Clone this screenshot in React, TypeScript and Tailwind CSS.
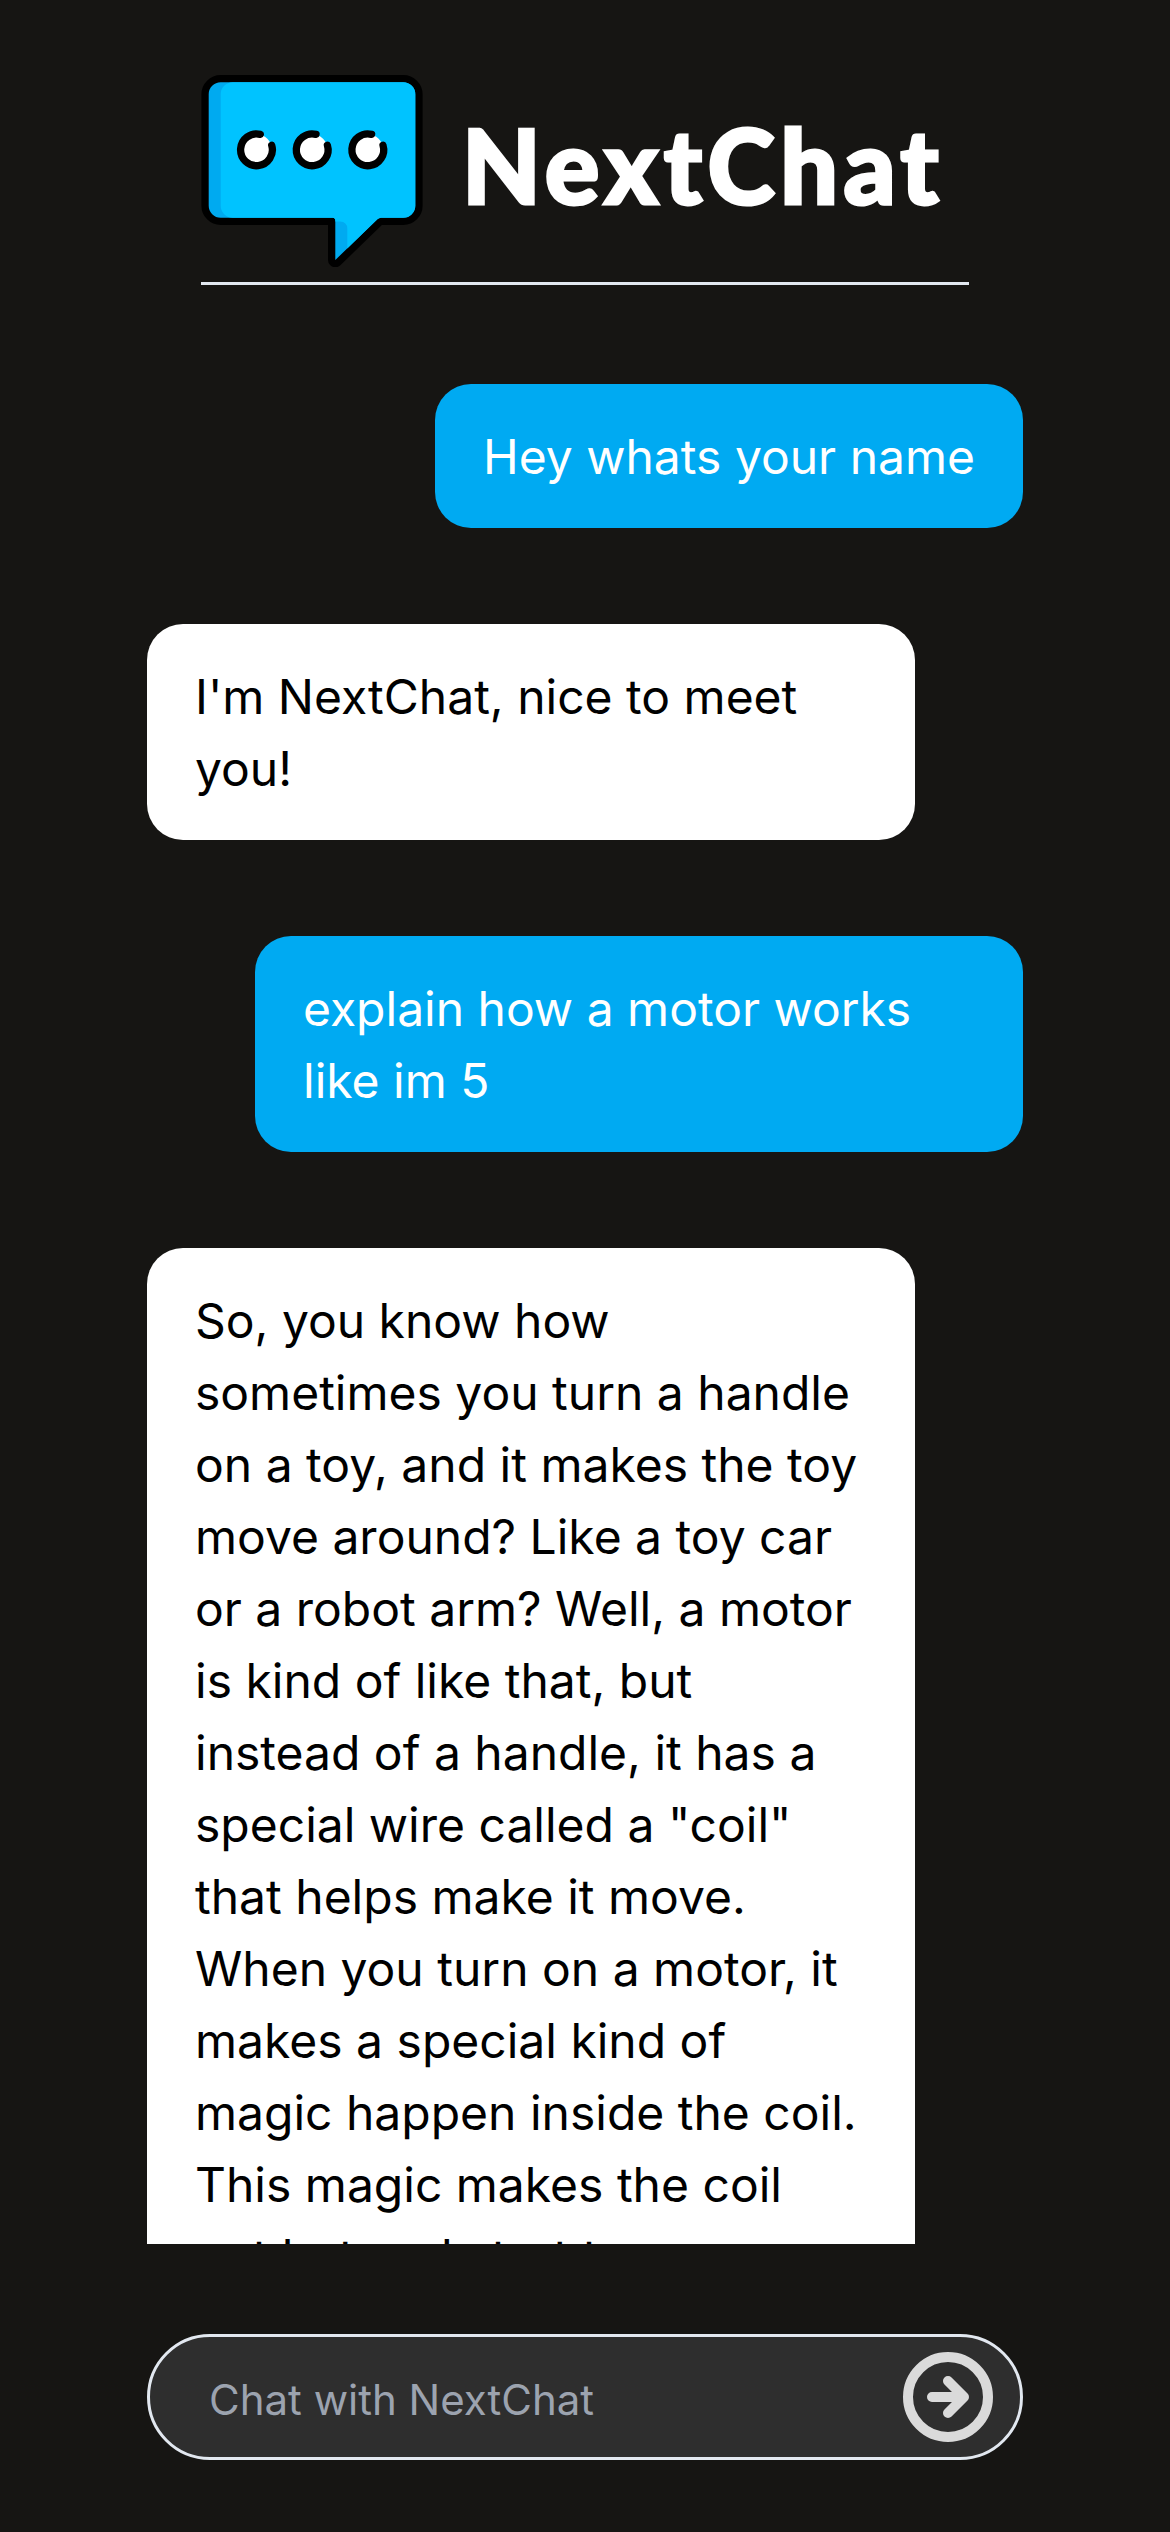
import React from "react";

type Message = { from: "user" | "bot"; text: string };

const messages: Message[] = [
  { from: "user", text: "Hey whats your name" },
  { from: "bot", text: "I'm NextChat, nice to meet you!" },
  { from: "user", text: "explain how a motor works like im 5" },
  {
    from: "bot",
    text: 'So, you know how sometimes you turn a handle on a toy, and it makes the toy move around? Like a toy car or a robot arm? Well, a motor is kind of like that, but instead of a handle, it has a special wire called a "coil" that helps make it move. When you turn on a motor, it makes a special kind of magic happen inside the coil. This magic makes the coil get hot and start to move.',
  },
];

function LogoDot({ x }: { x: number }) {
  return (
    <g transform={`translate(${x} 74.8)`}>
      <circle r="15.6" fill="#fff" />
      <path
        d="M4 -15.4A15.9 15.9 0 1 0 15.4 -4.6"
        fill="none"
        stroke="#000"
        strokeWidth="7.3"
        strokeLinecap="round"
      />
    </g>
  );
}

function Logo() {
  return (
    <svg viewBox="0 0 222 192" className="h-[192px] w-[222px] shrink-0" aria-hidden="true">
      <path
        d="M19.7 7.3H202.3A12 12 0 0 1 214.3 19.3V130.7A12 12 0 0 1 202.3 142.7H180Q178 142.7 176.4 144.2L134.3 185V145.5Q134.3 142.7 131.5 142.7H19.7A12 12 0 0 1 7.7 130.7V19.3A12 12 0 0 1 19.7 7.3Z"
        fill="#00aaf0"
        stroke="#000"
        strokeWidth="14.6"
        strokeLinejoin="round"
        paintOrder="stroke"
      />
      <path
        d="M31.7 7.3H202.3A12 12 0 0 1 214.3 19.3V130.7A12 12 0 0 1 202.3 142.7H180Q178 142.7 176.4 144.2L146.3 173.4V153.5Q146 147 139 146.6H134.3V145.5Q134.3 142.7 131.5 142.7H31.7A12 12 0 0 1 19.7 130.7V19.3A12 12 0 0 1 31.7 7.3Z"
        fill="#00c3ff"
      />
      <LogoDot x={55.3} />
      <LogoDot x={111} />
      <LogoDot x={166.6} />
    </svg>
  );
}

function SendIcon() {
  return (
    <svg
      viewBox="0 0 90 90"
      className="size-[90px]"
      fill="none"
      stroke="#dadada"
      strokeWidth="10"
      strokeLinecap="round"
      strokeLinejoin="round"
      aria-hidden="true"
    >
      <circle cx="45" cy="45" r="40" />
      <path d="M29 45H61M45 29L61 45L45 61" />
    </svg>
  );
}

function Bubble({ from, text }: Message) {
  return from === "user" ? (
    <div className="max-w-[768px] self-end rounded-[36px] bg-[#00aaf2] px-12 pt-[37px] pb-[35px] text-white">{text}</div>
  ) : (
    <div className="max-w-[768px] self-start rounded-[36px] bg-white px-12 pt-[37px] pb-[35px] text-black">{text}</div>
  );
}

export default function App() {
  return (
    <main className="flex h-[2532px] w-[1170px] flex-col items-center overflow-hidden bg-[#161513] font-['Inter',sans-serif]">
      <header className="mt-[75px] flex h-[210px] w-[768px] shrink-0 items-start border-b-[3px] border-slate-200">
        <Logo />
        <h1 className="mt-[27px] ml-[39px] font-['Lato',sans-serif] text-[102px] leading-[126px] font-black tracking-[5.4px] whitespace-nowrap text-white [-webkit-text-stroke:3px_white]">
          NextChat
        </h1>
      </header>

      <section className="mt-[99px] flex h-[1860px] w-[876px] shrink-0 flex-col gap-24 overflow-hidden text-[48px] leading-[72px]">
        {messages.map((m, i) => (
          <Bubble key={i} from={m.from} text={m.text} />
        ))}
      </section>

      <form className="mt-[90px] flex h-[126px] w-[876px] shrink-0 items-center rounded-full border-[3px] border-slate-200 bg-[#2e2e2e] pr-[27px] pl-[59px]">
        <input
          type="text"
          placeholder="Chat with NextChat"
          className="min-w-0 flex-1 bg-[#2e2e2e] pt-[5px] text-[42px] leading-[60px] text-white outline-none placeholder:text-[#9ca3af]"
        />
        <button type="button" aria-label="Send">
          <SendIcon />
        </button>
      </form>
    </main>
  );
}
